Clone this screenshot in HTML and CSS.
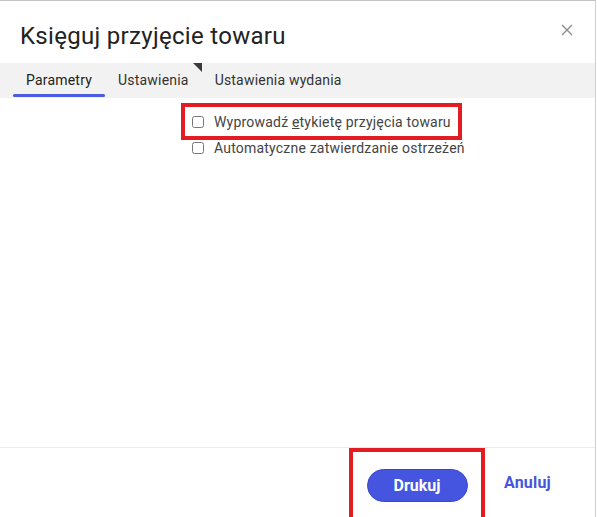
FILE: index.html
```html
<!DOCTYPE html>
<html lang="pl">
<head>
    <meta charset="UTF-8">
    <meta name="viewport" content="width=device-width, initial-scale=1.0">
    <title>Księguj przyjęcie towaru</title>
    <link rel="stylesheet" href="styles.css">
</head>
<body>
    <div class="dialog">
        <div class="dialog-header">
            <h1 class="dialog-title">Księguj przyjęcie towaru</h1>
            <button class="close-button" aria-label="Zamknij">
                <svg width="12" height="12" viewBox="0 0 12 12">
                    <path d="M1 1L11 11M11 1L1 11" stroke="#8a8a8a" stroke-width="1.3" fill="none"/>
                </svg>
            </button>
        </div>
        <div class="tab-bar">
            <div class="tab active">Parametry</div>
            <div class="tab marked">Ustawienia</div>
            <div class="tab">Ustawienia wydania</div>
        </div>
        <div class="dialog-body">
            <div class="options">
                <label class="option highlight">
                    <input type="checkbox" class="checkbox">
                    <span>Wyprowadź <u>e</u>tykietę przyjęcia towaru</span>
                </label>
                <label class="option">
                    <input type="checkbox" class="checkbox">
                    <span>Automatyczne zatwierdzanie ostrzeżeń</span>
                </label>
            </div>
        </div>
        <div class="dialog-footer">
            <div class="primary-wrap">
                <button class="button primary">Drukuj</button>
            </div>
            <button class="button link">Anuluj</button>
        </div>
    </div>
</body>
</html>
```

FILE: styles.css
```css
body {
    font-family: Roboto, "Noto Sans", sans-serif;
    background-color: #ffffff;
    margin: 0;
    padding: 0;
}
.dialog {
    width: 596px;
    height: 517px;
    border-top: 1px solid #c4c4c4;
    border-right: 1px solid #d0d0d0;
    display: flex;
    flex-direction: column;
    background-color: white;
    box-sizing: border-box;
}
.dialog-header {
    display: flex;
    justify-content: space-between;
    align-items: flex-start;
    padding: 0 22px 0 20px;
    height: 62px;
}
.dialog-title {
    margin: 0;
    padding-top: 20px;
    font-size: 24px;
    font-weight: 400;
    letter-spacing: 0.3px;
    color: #222;
    line-height: 30px;
}
.close-button {
    border: none;
    background: none;
    padding: 0;
    margin-top: 23px;
    cursor: pointer;
}
.tab-bar {
    display: flex;
    background-color: #f2f2f2;
    height: 35px;
    padding-left: 13px;
}
.tab {
    position: relative;
    padding: 0 13px;
    font-size: 14px;
    letter-spacing: 0.2px;
    color: #333;
    line-height: 35px;
}
.tab.active {
    color: #222;
}
.tab.active::after {
    content: "";
    position: absolute;
    left: 0;
    right: 0;
    bottom: 1px;
    height: 3px;
    border-radius: 2px;
    background-color: #4a5ae2;
}
.tab.marked::after {
    content: "";
    position: absolute;
    top: 0;
    right: 0;
    border-top: 9px solid #3a3a3a;
    border-left: 9px solid transparent;
}
.dialog-body {
    flex: 1;
    padding-top: 5px;
}
.options {
    display: flex;
    flex-direction: column;
    margin-left: 181px;
    width: 300px;
}
.option {
    display: flex;
    align-items: center;
    font-size: 14px;
    letter-spacing: 0.2px;
    color: #444;
    height: 17px;
    padding-left: 10px;
    box-sizing: border-box;
}
.option.highlight {
    width: 281px;
    height: 37px;
    border: 4px solid #e31b23;
    padding-left: 6px;
}
.option + .option {
    margin-top: -1px;
}
.checkbox {
    width: 12px;
    height: 12px;
    margin: 0 10px 0 1px;
}
.option u {
    text-decoration-thickness: 1px;
}
.dialog-footer {
    display: flex;
    justify-content: flex-end;
    align-items: center;
    border-top: 1px solid #ececec;
    height: 70px;
    padding-right: 44px;
    box-sizing: border-box;
}
.primary-wrap {
    border: 4px solid #e31b23;
    border-bottom: none;
    height: 70px;
    width: 136px;
    box-sizing: border-box;
    display: flex;
    align-items: center;
    justify-content: center;
    margin-right: 19px;
    margin-top: 1px;
}
.button {
    font-family: Roboto, "Noto Sans", sans-serif;
    font-size: 16px;
    font-weight: 700;
    cursor: pointer;
    border: none;
}
.primary {
    width: 101px;
    height: 33px;
    border-radius: 17px;
    background-color: #4655e0;
    color: white;
    border: 1px solid #3a47c4;
}
.link {
    background: none;
    color: #4655e0;
    padding: 0;
    letter-spacing: 0.2px;
}
```
